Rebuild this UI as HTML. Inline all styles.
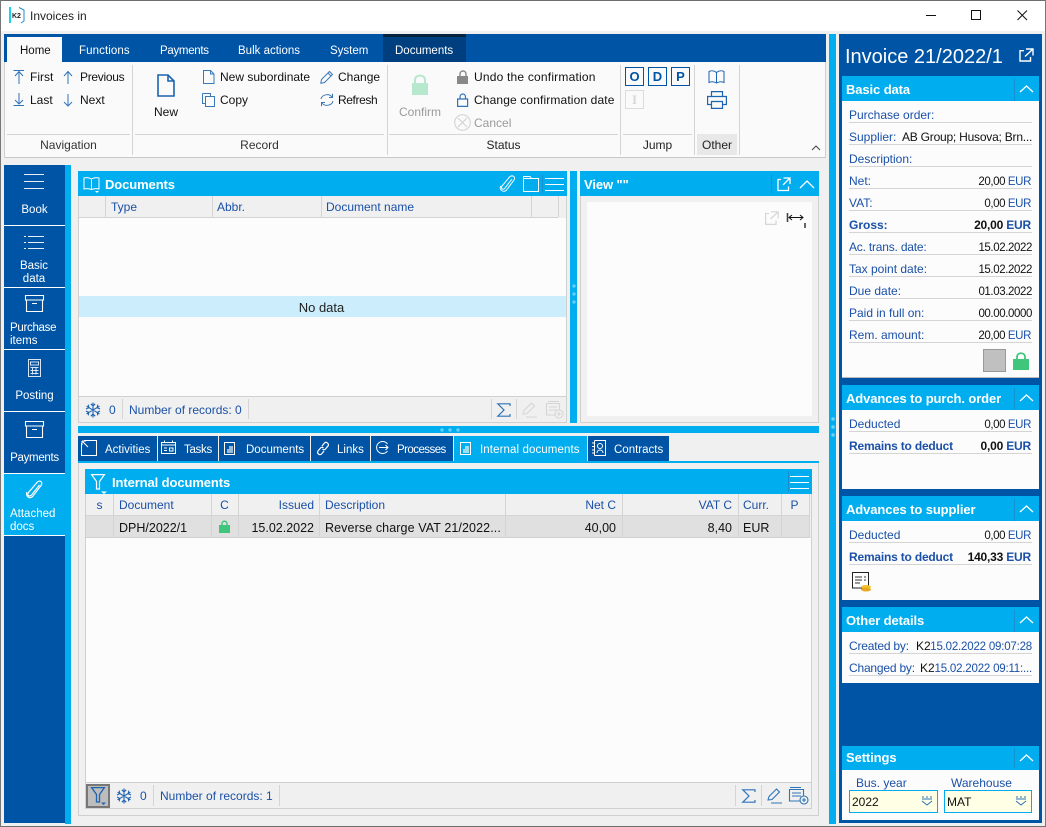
<!DOCTYPE html>
<html><head><meta charset="utf-8"><title>Invoices in</title>
<style>
html,body{margin:0;padding:0}
body{width:1046px;height:827px;position:relative;overflow:hidden;background:#f0f0f0;font:12px/16px "Liberation Sans",sans-serif;color:#111}
div,svg{position:absolute}
svg{fill:none;overflow:visible}
.t{position:absolute;white-space:nowrap;line-height:16px;height:16px}
.w{color:#fff}.b{color:#1a50a8}.g{color:#9a9a9a}
.h{font-weight:bold;font-size:13px;color:#fff;letter-spacing:-.1px}
.r{text-align:right}.c{text-align:center}
.v{font-size:11.5px;letter-spacing:-.4px;margin-top:1px}
.d{font-size:11.5px;letter-spacing:-.2px;margin-top:1px}
.m{letter-spacing:-.2px}
.cy{background:#00aeef}.bl{background:#0054a6}
.ln{background:#d4d4d4}
.x{font-size:12.5px}
</style></head><body>
<!-- window frame -->
<div style="left:0;top:0;width:1046px;height:1px;background:#6e6e6e"></div>
<div style="left:0;top:1px;width:1046px;height:30px;background:#fff"></div>
<div style="left:0;top:826px;width:1046px;height:1px;background:#6e6e6e"></div>
<div style="left:0;top:0;width:1px;height:827px;background:#777"></div>
<div style="left:1045px;top:0;width:1px;height:827px;background:#777"></div>
<!-- title -->
<div style="left:9px;top:7px;width:2px;height:16px;background:#1bd1f0"></div>
<div style="left:11px;top:7px;width:14px;height:16px"><svg width="14" height="16"><path d="M8 .5L13 3V14L10 16" stroke="#1a8fd0"/><text x="1" y="11" font-size="7" font-weight="bold" fill="#222" font-family="Liberation Sans">K2</text></svg></div>
<span class="t" style="left:30px;top:8px;font-size:12px;color:#222">Invoices in</span>
<svg style="left:926px;top:10px" width="102" height="11"><path d="M0 5.5H10" stroke="#111"/><path d="M45.5 .5H54.5V9.5H45.5Z" stroke="#111"/><path d="M91.5 .5L101 10M101 .5L91.5 10" stroke="#111"/></svg>

<!-- ribbon -->
<div class="bl" style="left:4px;top:34px;width:822px;height:28px"></div>
<div style="left:7px;top:37px;width:55px;height:25px;background:#fafafa"></div>
<div style="left:383px;top:34px;width:83px;height:3px;background:#03233f"></div>
<div style="left:383px;top:37px;width:83px;height:25px;background:#003f7f"></div>
<div style="left:4px;top:62px;width:822px;height:96px;background:#fafafa;border-bottom:1px solid #c8c8c8;border-left:1px solid #d0d0d0;border-right:1px solid #d0d0d0;box-sizing:border-box"></div>
<span class="t" style="left:20px;top:43px;font-size:11.5px">Home</span>
<span class="t w" style="left:79px;top:43px;font-size:11.5px;letter-spacing:.1px">Functions</span>
<span class="t w" style="left:160px;top:43px;font-size:11.5px;letter-spacing:-.3px">Payments</span>
<span class="t w" style="left:238px;top:43px;font-size:11.5px">Bulk actions</span>
<span class="t w" style="left:330px;top:43px;font-size:11.5px">System</span>
<span class="t w" style="left:395px;top:43px;font-size:11.5px">Documents</span>
<!-- group lines -->
<div class="ln" style="left:132px;top:65px;width:1px;height:90px"></div>
<div class="ln" style="left:387px;top:65px;width:1px;height:90px"></div>
<div class="ln" style="left:620px;top:65px;width:1px;height:90px"></div>
<div class="ln" style="left:694px;top:65px;width:1px;height:90px"></div>
<div class="ln" style="left:739px;top:65px;width:1px;height:90px"></div>
<div class="ln" style="left:7px;top:134px;width:123px;height:1px"></div>
<div class="ln" style="left:135px;top:134px;width:249px;height:1px"></div>
<div class="ln" style="left:389px;top:134px;width:229px;height:1px"></div>
<div class="ln" style="left:623px;top:134px;width:69px;height:1px"></div>
<div style="left:697px;top:134px;width:40px;height:21px;background:#e8e8e8"></div>
<span class="t c" style="left:7px;top:137px;width:123px;color:#333">Navigation</span>
<span class="t c" style="left:135px;top:137px;width:249px;color:#333">Record</span>
<span class="t c" style="left:389px;top:137px;width:229px;color:#222">Status</span>
<span class="t c" style="left:623px;top:137px;width:69px;color:#222">Jump</span>
<span class="t c" style="left:697px;top:137px;width:40px;color:#222">Other</span>
<svg style="left:811px;top:145px" width="10" height="6"><path d="M1 5L5 1L9 5" stroke="#444"/></svg>
<!-- nav -->
<svg style="left:13px;top:70px" width="66" height="38" stroke="#2f73b8"><path d="M.5.5H11M6 14V2M2 6L6 1.5L10 6"/><path d="M.5 35.5H11M6 23V34M2 30L6 34L10 30"/><path d="M55 14V1.5M51 6L55 1.5L59 6"/><path d="M55 24V36M51 32L55 36L59 32"/></svg>
<span class="t" style="left:30px;top:69px">First</span><span class="t" style="left:80px;top:69px;letter-spacing:-.3px">Previous</span>
<span class="t" style="left:30px;top:92px">Last</span><span class="t" style="left:80px;top:92px">Next</span>
<!-- record -->
<svg style="left:157px;top:74px" width="18" height="23" stroke="#1d63b0" stroke-width="1.6"><path d="M1 1H11L17 7V22H1ZM11 1V7H17"/></svg>
<span class="t c" style="left:146px;top:104px;width:40px">New</span>
<svg style="left:203px;top:70px" width="12" height="14" stroke="#3a78bb"><path d="M.5.5H7.5L11 4V13.5H.5ZM7.5.5V4H11"/></svg>
<svg style="left:202px;top:93px" width="14" height="14" stroke="#3a78bb"><path d="M.5.5H8.5V3M.5.5V10.5H3.5M3.5 3.5H12.5V13.5H3.5Z"/></svg>
<span class="t" style="left:220px;top:69px">New subordinate</span><span class="t" style="left:220px;top:92px">Copy</span>
<svg style="left:320px;top:70px" width="14" height="14" stroke="#3a78bb"><path d="M.8 13.2L1.5 9.5L9.5 1.5L12.5 4.5L4.5 12.5ZM8 3L11 6"/></svg>
<svg style="left:320px;top:93px" width="14" height="14" stroke="#3a78bb"><path d="M1 6C2 1.5 9 0 12 4M12.5.8V4.5H9M13 8C12 12.5 5 14 2 10M1.5 13.2V9.5H5"/></svg>
<span class="t" style="left:338px;top:69px">Change</span><span class="t" style="left:338px;top:92px;letter-spacing:-.4px">Refresh</span>
<!-- status -->
<svg style="left:411px;top:74px" width="18" height="22"><path d="M4 9V6C4 0 14 0 14 6V9" stroke="#b5e8cc" stroke-width="2"/><rect x="1" y="9" width="16" height="12" fill="#b5e8cc"/></svg>
<span class="t c g" style="left:395px;top:104px;width:50px">Confirm</span>
<svg style="left:457px;top:70px" width="12" height="14"><path d="M3 6V4C3 0 9 0 9 4V6" stroke="#888" stroke-width="1.4"/><rect y="6" width="11" height="8" fill="#888"/></svg>
<svg style="left:457px;top:93px" width="12" height="14" stroke="#2f73b8" stroke-width="1.2"><path d="M3 6V4C3 0 8.5 0 8.5 4V6M.6 6H10.6V13.4H.6Z"/></svg>
<svg style="left:454px;top:114px" width="17" height="17" stroke="#d0d0d0"><circle cx="8.5" cy="8.5" r="7.8"/><path d="M4 4L13 13M13 4L4 13"/></svg>
<span class="t" style="left:474px;top:69px;letter-spacing:.2px">Undo the confirmation</span>
<span class="t" style="left:474px;top:92px;letter-spacing:.13px">Change confirmation date</span>
<span class="t g" style="left:474px;top:115px">Cancel</span>
<!-- jump -->
<div style="left:625px;top:67px;width:17px;height:17px;border:1px solid #0054a6;color:#0054a6;font:bold 13px/17px 'Liberation Sans',sans-serif;text-align:center">O</div>
<div style="left:648px;top:67px;width:17px;height:17px;border:1px solid #0054a6;color:#0054a6;font:bold 13px/17px 'Liberation Sans',sans-serif;text-align:center">D</div>
<div style="left:671px;top:67px;width:17px;height:17px;border:1px solid #0054a6;color:#0054a6;font:bold 13px/17px 'Liberation Sans',sans-serif;text-align:center">P</div>
<div style="left:625px;top:90px;width:17px;height:17px;border:1px solid #dcdcdc;color:#d8d8d8;font:bold 13px/17px 'Liberation Serif',serif;text-align:center">I</div>
<svg style="left:708px;top:70px" width="18" height="14" stroke="#1d63b0"><path d="M8.5 2.5C6 .5 3 .5 1 1.5V12.5C3 11.5 6 11.5 8.5 13C11 11.5 14 11.5 16 12.5V1.5C14 .5 11 .5 8.5 2.5V13"/></svg>
<svg style="left:707px;top:91px" width="20" height="18" stroke="#1d63b0" stroke-width="1.2"><path d="M4.5 5.5V.6H15.5V5.5M4.5 13.5H.6V5.5H19.4V13.5H15.5M4.5 10.5H15.5V17.4H4.5Z"/></svg>

<!-- vertical splitter + right panel -->
<div class="cy" style="left:829px;top:34px;width:7px;height:790px"></div>
<div class="bl" style="left:839px;top:34px;width:203px;height:789px"></div>
<svg style="left:831px;top:416px" width="4" height="24"><circle cx="2" cy="3" r="1.7" fill="#6fd0f5"/><circle cx="2" cy="11" r="1.7" fill="#6fd0f5"/><circle cx="2" cy="19" r="1.7" fill="#6fd0f5"/></svg>
<span class="t w" style="left:845px;top:45px;height:25px;line-height:25px;font-size:20px">Invoice 21/2022/1</span>
<svg style="left:1019px;top:48px" width="15" height="14" stroke="#fff" stroke-width="1.4"><path d="M5 2.7H1V13H11.5V9M7 1H14V7.5M14 1L6 8.5"/></svg>

<!-- right sections -->
<div style="left:842px;top:76px;width:197px;height:302px;background:#fcfcfc;border-bottom:1px solid #bbb;box-sizing:border-box"></div>
<div class="cy" style="left:842px;top:76px;width:197px;height:25px"></div>
<span class="h t" style="left:846px;top:82px">Basic data</span>
<div style="left:842px;top:385px;width:197px;height:104px;background:#fcfcfc"></div>
<div class="cy" style="left:842px;top:385px;width:197px;height:25px"></div>
<span class="h t" style="left:846px;top:391px">Advances to purch. order</span>
<div style="left:842px;top:496px;width:197px;height:104px;background:#fcfcfc"></div>
<div class="cy" style="left:842px;top:496px;width:197px;height:25px"></div>
<span class="h t" style="left:846px;top:502px">Advances to supplier</span>
<div style="left:842px;top:607px;width:197px;height:76px;background:#fcfcfc"></div>
<div class="cy" style="left:842px;top:607px;width:197px;height:25px"></div>
<span class="h t" style="left:846px;top:613px">Other details</span>
<div style="left:842px;top:746px;width:197px;height:74px;background:#fcfcfc"></div>
<div class="cy" style="left:842px;top:746px;width:197px;height:24px"></div>
<span class="h t" style="left:846px;top:750px">Settings</span>
<svg style="left:1014px;top:78px" width="26" height="680" stroke="#fff" stroke-width="1.3"><path d="M6 14L12.5 8L19 14"/><path d="M6 323L12.5 317L19 323"/><path d="M6 434L12.5 428L19 434"/><path d="M6 545L12.5 539L19 545"/><path d="M6 683L12.5 677L19 683"/><path d="M.5 1V23M.5 310V332M.5 421V443M.5 532V554M.5 670V690" stroke="#1590d0" stroke-width="1"/></svg>

<!-- row lines -->
<div class="ln" style="left:849px;top:122px;width:183px;height:1px"></div>
<div class="ln" style="left:849px;top:144px;width:183px;height:1px"></div>
<div class="ln" style="left:849px;top:166px;width:183px;height:1px"></div>
<div class="ln" style="left:849px;top:188px;width:183px;height:1px"></div>
<div class="ln" style="left:849px;top:210px;width:183px;height:1px"></div>
<div class="ln" style="left:849px;top:232px;width:183px;height:1px"></div>
<div class="ln" style="left:849px;top:254px;width:183px;height:1px"></div>
<div class="ln" style="left:849px;top:276px;width:183px;height:1px"></div>
<div class="ln" style="left:849px;top:298px;width:183px;height:1px"></div>
<div class="ln" style="left:849px;top:320px;width:183px;height:1px"></div>
<div class="ln" style="left:849px;top:342px;width:183px;height:1px"></div>
<div class="ln" style="left:849px;top:431px;width:183px;height:1px"></div>
<div class="ln" style="left:849px;top:453px;width:183px;height:1px"></div>
<div class="ln" style="left:849px;top:542px;width:183px;height:1px"></div>
<div class="ln" style="left:849px;top:564px;width:183px;height:1px"></div>
<div class="ln" style="left:849px;top:653px;width:183px;height:1px"></div>
<div class="ln" style="left:849px;top:675px;width:183px;height:1px"></div>

<span class="t b" style="left:849px;top:107px">Purchase order:</span>
<span class="t b" style="left:849px;top:129px">Supplier:</span><span class="t" style="left:902px;top:129px;letter-spacing:-.22px">AB Group; Husova; Brn...</span>
<span class="t b" style="left:849px;top:151px">Description:</span>
<span class="t b" style="left:849px;top:173px">Net:</span><span class="t r v" style="right:15px;top:173px">20,00 <span class="b">EUR</span></span>
<span class="t b" style="left:849px;top:195px">VAT:</span><span class="t r v" style="right:15px;top:195px">0,00 <span class="b">EUR</span></span>
<span class="t b" style="left:849px;top:217px;font-weight:bold">Gross:</span><span class="t r" style="right:15px;top:217px;font-weight:bold;letter-spacing:-.2px">20,00 <span class="b">EUR</span></span>
<span class="t b m" style="left:849px;top:239px">Ac. trans. date:</span><span class="t r v" style="right:14px;top:239px">15.02.2022</span>
<span class="t b" style="left:849px;top:261px">Tax point date:</span><span class="t r v" style="right:14px;top:261px">15.02.2022</span>
<span class="t b" style="left:849px;top:283px">Due date:</span><span class="t r v" style="right:14px;top:283px">01.03.2022</span>
<span class="t b" style="left:849px;top:305px">Paid in full on:</span><span class="t r v" style="right:14px;top:305px">00.00.0000</span>
<span class="t b" style="left:849px;top:327px">Rem. amount:</span><span class="t r v" style="right:15px;top:327px">20,00 <span class="b">EUR</span></span>
<div style="left:983px;top:349px;width:21px;height:21px;background:#c0c0c0;border:1px solid #999"></div>
<svg style="left:1013px;top:352px" width="16" height="18"><path d="M4 7V5C4 0 12 0 12 5V7" stroke="#3fc67c" stroke-width="1.8"/><rect y="7" width="16" height="11" fill="#3fc67c"/></svg>

<span class="t b" style="left:849px;top:416px">Deducted</span><span class="t r v" style="right:15px;top:416px">0,00 <span class="b">EUR</span></span>
<span class="t b m" style="left:849px;top:438px;font-weight:bold">Remains to deduct</span><span class="t r" style="right:15px;top:438px;font-weight:bold;letter-spacing:-.2px">0,00 <span class="b">EUR</span></span>
<span class="t b" style="left:849px;top:527px">Deducted</span><span class="t r v" style="right:15px;top:527px">0,00 <span class="b">EUR</span></span>
<span class="t b m" style="left:849px;top:549px;font-weight:bold">Remains to deduct</span><span class="t r" style="right:15px;top:549px;font-weight:bold;letter-spacing:-.2px">140,33 <span class="b">EUR</span></span>
<svg style="left:852px;top:572px" width="20" height="20"><path d="M.5.5H16.5V16H.5Z" stroke="#222" fill="#fff"/><path d="M3 5H10M12 5H14M3 8H10M12 8H14M3 11H8" stroke="#333"/><ellipse cx="14" cy="15" rx="5" ry="2" fill="#f3c22d"/><ellipse cx="14" cy="17.5" rx="5" ry="2" fill="#e8a820"/></svg>

<span class="t b m" style="left:849px;top:638px">Created by:</span><span class="t" style="left:916px;top:638px">K2</span><span class="t b r d" style="right:14px;top:638px">15.02.2022 09:07:28</span>
<span class="t b m" style="left:849px;top:660px">Changed by:</span><span class="t" style="left:920px;top:660px">K2</span><span class="t b r d" style="right:14px;top:660px">15.02.2022 09:11:...</span>

<span class="t b" style="left:856px;top:775px">Bus. year</span><span class="t b" style="left:951px;top:775px">Warehouse</span>
<div style="left:849px;top:790px;width:87px;height:21px;background:#ffffe6;border:1px solid #00aeef"></div>
<div style="left:944px;top:790px;width:86px;height:21px;background:#ffffe6;border:1px solid #00aeef"></div>
<span class="t" style="left:852px;top:794px">2022</span><span class="t" style="left:947px;top:794px">MAT</span>
<svg style="left:921px;top:796px" width="106" height="10" stroke="#2f73b8"><path d="M1 1H3M5 1H7M9 1H11M1 3H11M1 5L6 9L11 5"/><path d="M95 1H97M99 1H101M103 1H105M95 3H105M95 5L100 9L105 5"/></svg>

<!-- left nav -->
<div class="bl" style="left:4px;top:165px;width:61px;height:658px"></div>
<div class="cy" style="left:65px;top:165px;width:6px;height:659px"></div>
<div style="left:4px;top:225px;width:61px;height:1px;background:#fff"></div>
<div style="left:4px;top:287px;width:61px;height:1px;background:#fff"></div>
<div style="left:4px;top:349px;width:61px;height:1px;background:#fff"></div>
<div style="left:4px;top:411px;width:61px;height:1px;background:#fff"></div>
<div class="cy" style="left:4px;top:474px;width:61px;height:61px"></div>
<div style="left:4px;top:473px;width:61px;height:1px;background:#fff"></div>
<div style="left:4px;top:535px;width:61px;height:1px;background:#fff"></div>
<svg style="left:24px;top:174px" width="20" height="16" stroke="#fff" stroke-opacity=".9"><path d="M0 .5H20M0 7.5H20M0 14.5H20"/></svg>
<svg style="left:24px;top:234px" width="20" height="16" stroke="#fff" stroke-opacity=".9"><path d="M4 2.5H20M4 8.5H20M4 14.5H20M0 2.5H2M0 8.5H2M0 14.5H2"/></svg>
<svg style="left:25px;top:295px" width="19" height="17" stroke="#fff" stroke-width="1.1"><path d="M.5.5H18.5V5H.5ZM1.5 5V16.5H17.5V5M7 8.5H12"/></svg>
<svg style="left:28px;top:359px" width="13" height="18" stroke="#fff" stroke-opacity=".85"><path d="M.5.5H12.5V17.5H.5ZM2.5 3V6H10.5V3ZM2.5 8.5H10.5M2.5 11.5H10.5M2.5 14.5H10.5M4.5 8V15.5M8 8V15.5"/></svg>
<svg style="left:25px;top:421px" width="19" height="17" stroke="#fff" stroke-width="1.1"><path d="M.5.5H18.5V5H.5ZM1.5 5V16.5H17.5V5M7 8.5H12"/></svg>
<svg style="left:26px;top:480px" width="17" height="20" stroke="#fff" stroke-width="1.2"><path d="M13.5 5L5.5 15C3.5 17.5 .5 15 2.5 12.5L11 2.5C13.5 -.5 17.5 2 15 5.5L7 16C4 20 -1 16 1 12"/></svg>
<span class="t w c" style="left:4px;top:202px;width:61px;font-size:11.5px">Book</span>
<span class="t w c" style="left:4px;top:258px;width:60px;font-size:11.5px">Basic</span>
<span class="t w c" style="left:4px;top:271px;width:60px;font-size:11.5px">data</span>
<span class="t w" style="left:10px;top:320px;font-size:11.5px;letter-spacing:-.3px">Purchase</span>
<span class="t w" style="left:10px;top:333px;font-size:11.5px">items</span>
<span class="t w c" style="left:4px;top:388px;width:61px;font-size:11.5px">Posting</span>
<span class="t w c" style="left:4px;top:450px;width:61px;font-size:11.5px;letter-spacing:-.3px">Payments</span>
<span class="t w" style="left:10px;top:506px;font-size:11.5px">Attached</span>
<span class="t w" style="left:10px;top:519px;font-size:11.5px">docs</span>

<!-- documents panel -->
<div style="left:78px;top:171px;width:489px;height:252px;border:1px solid #d0d0d0;border-top:0;box-sizing:border-box"></div>
<div class="cy" style="left:78px;top:171px;width:489px;height:25px"></div>
<svg style="left:83px;top:177px" width="18" height="16" stroke="#fff"><path d="M8.5 2C6 .5 3 .5 1 1V12C3 11.5 6 11.5 8.5 12.5C11 11.5 14 11.5 16 12V1C14 .5 11 .5 8.5 2V12.5"/><path d="M12 14H16L14 16Z" fill="#fff" stroke="none"/></svg>
<span class="h t" style="left:105px;top:177px">Documents</span>
<svg style="left:500px;top:175px" width="66" height="18" stroke="#fff"><path d="M12 4L5 13C3 15.5 .5 13.5 2 11L9.5 2C12 -.5 16 1.5 14 5L6.5 15C4 18 -1.5 15 .8 11"/><path d="M23.5 3.5H38.5V16.5H23.5ZM23.5 3.5V1.5H30L31.5 3.5"/><path d="M42.5 0V19" stroke="#1590d0"/><path d="M45 3.5H64M45 9.5H64M45 15.5H64"/></svg>
<div style="left:79px;top:196px;width:479px;height:21px;background:#f0f0f0;border-bottom:1px solid #d4d4d4;box-sizing:content-box"></div>
<div class="ln" style="left:105px;top:196px;width:1px;height:21px"></div>
<div class="ln" style="left:212px;top:196px;width:1px;height:21px"></div>
<div class="ln" style="left:321px;top:196px;width:1px;height:21px"></div>
<div class="ln" style="left:531px;top:196px;width:1px;height:21px"></div>
<div class="ln" style="left:558px;top:196px;width:1px;height:21px"></div>
<span class="t b" style="left:111px;top:199px">Type</span>
<span class="t b" style="left:217px;top:199px">Abbr.</span>
<span class="t b" style="left:326px;top:199px">Document name</span>
<div style="left:79px;top:218px;width:487px;height:178px;background:#fcfcfc"></div>
<div style="left:79px;top:296px;width:487px;height:21px;background:#ccedfb"></div>
<span class="t c" style="left:78px;top:300px;width:487px;font-size:13px;color:#222">No data</span>
<div style="left:79px;top:396px;width:487px;height:1px;background:#d0d0d0"></div>
<svg style="left:85px;top:402px" width="16" height="16" stroke="#1d63b0" stroke-width="1.1"><path d="M8 .5V15.5M1.5 4.2L14.5 11.8M14.5 4.2L1.5 11.8M5.8 1.8L8 4L10.2 1.8M5.8 14.2L8 12L10.2 14.2M1 7L3.8 5.6L3.2 2.6M15 7L12.2 5.6L12.8 2.6M1 9L3.8 10.4L3.2 13.4M15 9L12.2 10.4L12.8 13.4"/></svg>
<span class="t b" style="left:109px;top:402px">0</span>
<span class="t b" style="left:129px;top:402px">Number of records: 0</span>
<div class="ln" style="left:122px;top:399px;width:1px;height:20px"></div>
<div class="ln" style="left:248px;top:399px;width:1px;height:20px"></div>
<div class="ln" style="left:491px;top:399px;width:1px;height:20px"></div>
<div class="ln" style="left:516px;top:399px;width:1px;height:20px"></div>
<svg style="left:497px;top:403px" width="14" height="14" stroke="#2f73b8" stroke-width="1.2"><path d="M13 3V.8H.8L7 7L.8 13.2H13V11"/></svg>
<svg style="left:522px;top:402px" width="16" height="16" stroke="#d6d6d6" stroke-width="1.1"><path d="M1 12L2 8.5L9.5 1L12.5 4L5 11.5ZM4 15H15"/></svg>
<svg style="left:544px;top:401px" width="20" height="18" stroke="#d6d6d6" stroke-width="1.1"><path d="M4 .5H15M2.5 2.5H15.5V14H2.5ZM5 6H13M5 9H13"/><circle cx="15" cy="13" r="4" fill="#f0f0f0"/><path d="M13 13H17M15 11V15"/></svg>

<!-- center splitter -->
<div class="cy" style="left:570px;top:171px;width:7px;height:252px"></div>
<svg style="left:572px;top:283px" width="4" height="24"><circle cx="2" cy="3" r="1.6" fill="#6fd0f5"/><circle cx="2" cy="11" r="1.6" fill="#6fd0f5"/><circle cx="2" cy="19" r="1.6" fill="#6fd0f5"/></svg>

<!-- view panel -->
<div style="left:580px;top:196px;width:239px;height:227px;border:1px solid #d0d0d0;border-top:0;box-sizing:border-box"></div>
<div class="cy" style="left:580px;top:171px;width:239px;height:25px"></div>
<span class="h t" style="left:584px;top:177px">View ""</span>
<svg style="left:771px;top:175px" width="44" height="18" stroke="#fff" stroke-width="1.3"><path d="M.5 0V18" stroke="#1590d0" stroke-width="1"/><path d="M10 4.5H7V15.5H17.5V11.5M12.5 3H19V9M19 3L12 10"/><path d="M29 13L36 6L43 13"/></svg>
<div style="left:587px;top:202px;width:225px;height:214px;background:#fcfcfc"></div>
<svg style="left:765px;top:211px" width="14" height="14" stroke="#d6d6d6" stroke-width="1.2"><path d="M4 2.5H.6V13.4H11V9.5M6 .8H13.2V7.5M13.2.8L5.5 8"/></svg>
<svg style="left:787px;top:213px" width="19" height="16" stroke="#111"><path d="M.5 0V9" stroke="#444" stroke-width="1.6"/><path d="M2 4.5H16M5 2L2 4.5L5 7M13 2L16 4.5L13 7"/><path d="M18 10V15" stroke-width="1.6" stroke="#444"/></svg>

<!-- horizontal splitter -->
<div class="cy" style="left:78px;top:426px;width:741px;height:7px"></div>
<svg style="left:440px;top:428px" width="20" height="4"><circle cx="2" cy="2" r="1.6" fill="#6fd0f5"/><circle cx="10" cy="2" r="1.6" fill="#6fd0f5"/><circle cx="18" cy="2" r="1.6" fill="#6fd0f5"/></svg>

<!-- tabs -->
<div class="bl" style="left:78px;top:436px;width:79px;height:25px"></div>
<div class="bl" style="left:158px;top:436px;width:60px;height:25px"></div>
<div class="bl" style="left:219px;top:436px;width:91px;height:25px"></div>
<div class="bl" style="left:311px;top:436px;width:59px;height:25px"></div>
<div class="bl" style="left:371px;top:436px;width:82px;height:25px"></div>
<div class="cy" style="left:454px;top:436px;width:133px;height:25px"></div>
<div class="bl" style="left:588px;top:436px;width:81px;height:25px"></div>
<div class="cy" style="left:78px;top:461px;width:741px;height:2px"></div>
<svg style="left:81px;top:440px" width="16" height="16" stroke="#fff"><path d="M3 .5H15.5V15.5H.5V3M1 1L7 7M1 1V5M1 1H5"/></svg>
<svg style="left:161px;top:440px" width="15" height="14" stroke="#fff"><path d="M.5 2.5H14.5V13.5H.5ZM.5 5H14.5M3.5 .5V3M11.5 .5V3M3 8H6M3 10.5H6M8.5 8H12V11H8.5Z"/></svg>
<svg style="left:224px;top:442px" width="11" height="13"><path d="M.5.5H10.5V12.5H.5Z" stroke="#fff"/><path d="M5 4H9V11H3V7H5Z" fill="#fff" fill-opacity=".6"/></svg>
<svg style="left:316px;top:441px" width="14" height="15" stroke="#fff" stroke-width="1.2"><path d="M6 5L8.5 2C10 .3 13.5 2.5 12 5L9.5 8C8.5 9 7.5 9 6.5 8M8 10L5.5 13C4 14.8 .5 12.5 2 10L4.5 7C5.5 6 6.5 6 7.5 7"/></svg>
<svg style="left:375px;top:441px" width="14" height="13" stroke="#fff"><path d="M12.5 3A6 6 0 1 0 12.5 10M4 6.5H13M10.5 4L13 6.5L10.5 9"/></svg>
<svg style="left:460px;top:442px" width="11" height="13"><path d="M.5.5H10.5V12.5H.5Z" stroke="#fff"/><path d="M5 4H9V11H3V7H5Z" fill="#fff" fill-opacity=".6"/></svg>
<svg style="left:592px;top:440px" width="14" height="16" stroke="#fff"><path d="M2.5.5H13.5V15.5H2.5M2.5.5V15.5M0 3H2.5M0 6.5H2.5M0 10H2.5M0 13H2.5M5 13C5 9 11 9 11 13"/><circle cx="8" cy="6" r="2.5"/></svg>
<span class="t w" style="left:105px;top:442px;font-size:11.5px">Activities</span>
<span class="t w" style="left:184px;top:442px;font-size:11.5px;letter-spacing:-.3px">Tasks</span>
<span class="t w" style="left:246px;top:442px;font-size:11.5px">Documents</span>
<span class="t w" style="left:337px;top:442px;font-size:11.5px">Links</span>
<span class="t w" style="left:397px;top:442px;font-size:11.5px;letter-spacing:-.55px">Processes</span>
<span class="t w" style="left:480px;top:442px;font-size:11.5px;letter-spacing:.1px">Internal documents</span>
<span class="t w" style="left:614px;top:442px;font-size:11.5px">Contracts</span>

<!-- lower container -->
<div style="left:78px;top:463px;width:741px;height:353px;border:1px solid #d0d0d0;border-top:0;box-sizing:border-box"></div>
<div style="left:85px;top:494px;width:727px;height:315px;border:1px solid #d0d0d0;border-top:0;box-sizing:border-box"></div>
<div class="cy" style="left:85px;top:469px;width:727px;height:25px"></div>
<svg style="left:91px;top:474px" width="17" height="20" stroke="#fff" stroke-width="1.2"><path d="M.6.6H13.4L8.5 7.5V15H5.5V7.5Z"/><path d="M10 17.5H16L13 20Z" fill="#fff" stroke="none"/></svg>
<span class="h t" style="left:112px;top:475px">Internal documents</span>
<svg style="left:788px;top:471px" width="21" height="21" stroke="#fff"><path d="M.5 0V21" stroke="#1590d0"/><path d="M2 5.5H21M2 11.5H21M2 17.5H21"/></svg>
<div style="left:86px;top:494px;width:723px;height:22px;background:#f0f0f0"></div>
<div style="left:86px;top:516px;width:723px;height:22px;background:#e0e0e0;border-bottom:1px solid #d0d0d0;box-sizing:border-box"></div>
<div style="left:86px;top:515px;width:723px;height:1px;background:#d4d4d4"></div>
<div style="left:86px;top:538px;width:725px;height:244px;background:#fcfcfc"></div>
<div class="ln" style="left:113px;top:494px;width:1px;height:44px"></div>
<div class="ln" style="left:211px;top:494px;width:1px;height:44px"></div>
<div class="ln" style="left:238px;top:494px;width:1px;height:44px"></div>
<div class="ln" style="left:319px;top:494px;width:1px;height:44px"></div>
<div class="ln" style="left:505px;top:494px;width:1px;height:44px"></div>
<div class="ln" style="left:622px;top:494px;width:1px;height:44px"></div>
<div class="ln" style="left:738px;top:494px;width:1px;height:44px"></div>
<div class="ln" style="left:781px;top:494px;width:1px;height:44px"></div>
<div class="ln" style="left:809px;top:494px;width:1px;height:44px"></div>
<span class="t b c" style="left:86px;top:497px;width:27px">s</span>
<span class="t b" style="left:119px;top:497px">Document</span>
<span class="t b c" style="left:211px;top:497px;width:27px">C</span>
<span class="t b r" style="right:732px;top:497px">Issued</span>
<span class="t b" style="left:325px;top:497px">Description</span>
<span class="t b r" style="right:430px;top:497px">Net C</span>
<span class="t b r" style="right:314px;top:497px">VAT C</span>
<span class="t b" style="left:743px;top:497px">Curr.</span>
<span class="t b c" style="left:781px;top:497px;width:27px">P</span>
<span class="t x" style="left:119px;top:520px">DPH/2022/1</span>
<svg style="left:219px;top:520px" width="11" height="13"><path d="M3 5V3.5C3 .5 8 .5 8 3.5V5" stroke="#3fc67c" stroke-width="1.4"/><rect y="5" width="11" height="8" fill="#3fc67c"/></svg>
<span class="t r x" style="right:732px;top:520px">15.02.2022</span>
<span class="t x" style="left:325px;top:520px;letter-spacing:.1px">Reverse charge VAT 21/2022...</span>
<span class="t r x" style="right:430px;top:520px">40,00</span>
<span class="t r x" style="right:314px;top:520px">8,40</span>
<span class="t x" style="left:743px;top:520px">EUR</span>
<div style="left:86px;top:782px;width:725px;height:1px;background:#d0d0d0"></div>
<div style="left:86px;top:784px;width:20px;height:20px;background:#bdbdbd;border:2px solid #777"></div>
<svg style="left:91px;top:787px" width="17" height="19" stroke="#1d63b0" stroke-width="1.3"><path d="M.6.6H13.4L8.5 7.5V15H5.5V7.5Z"/><path d="M10 15.5H15L12.5 18Z" fill="#1d63b0" stroke="none"/></svg>
<svg style="left:116px;top:788px" width="16" height="16" stroke="#1d63b0" stroke-width="1.1"><path d="M8 .5V15.5M1.5 4.2L14.5 11.8M14.5 4.2L1.5 11.8M5.8 1.8L8 4L10.2 1.8M5.8 14.2L8 12L10.2 14.2M1 7L3.8 5.6L3.2 2.6M15 7L12.2 5.6L12.8 2.6M1 9L3.8 10.4L3.2 13.4M15 9L12.2 10.4L12.8 13.4"/></svg>
<span class="t b" style="left:140px;top:788px">0</span>
<span class="t b" style="left:160px;top:788px">Number of records: 1</span>
<div class="ln" style="left:153px;top:785px;width:1px;height:21px"></div>
<div class="ln" style="left:279px;top:785px;width:1px;height:21px"></div>
<div class="ln" style="left:735px;top:785px;width:1px;height:21px"></div>
<div class="ln" style="left:761px;top:785px;width:1px;height:21px"></div>
<svg style="left:742px;top:789px" width="14" height="14" stroke="#2f73b8" stroke-width="1.2"><path d="M13 3V.8H.8L7 7L.8 13.2H13V11"/></svg>
<svg style="left:767px;top:788px" width="16" height="16" stroke="#2f73b8" stroke-width="1.1"><path d="M1 12L2 8.5L9.5 1L12.5 4L5 11.5ZM4 15H15"/></svg>
<svg style="left:789px;top:787px" width="20" height="18" stroke="#2f73b8" stroke-width="1.1"><path d="M1 .5H12M.5 2.5H14.5V14H.5ZM3 6H12M3 9H12"/><circle cx="15" cy="13" r="4" fill="#f0f0f0"/><path d="M13 13H17M15 11V15"/></svg>
</body></html>
